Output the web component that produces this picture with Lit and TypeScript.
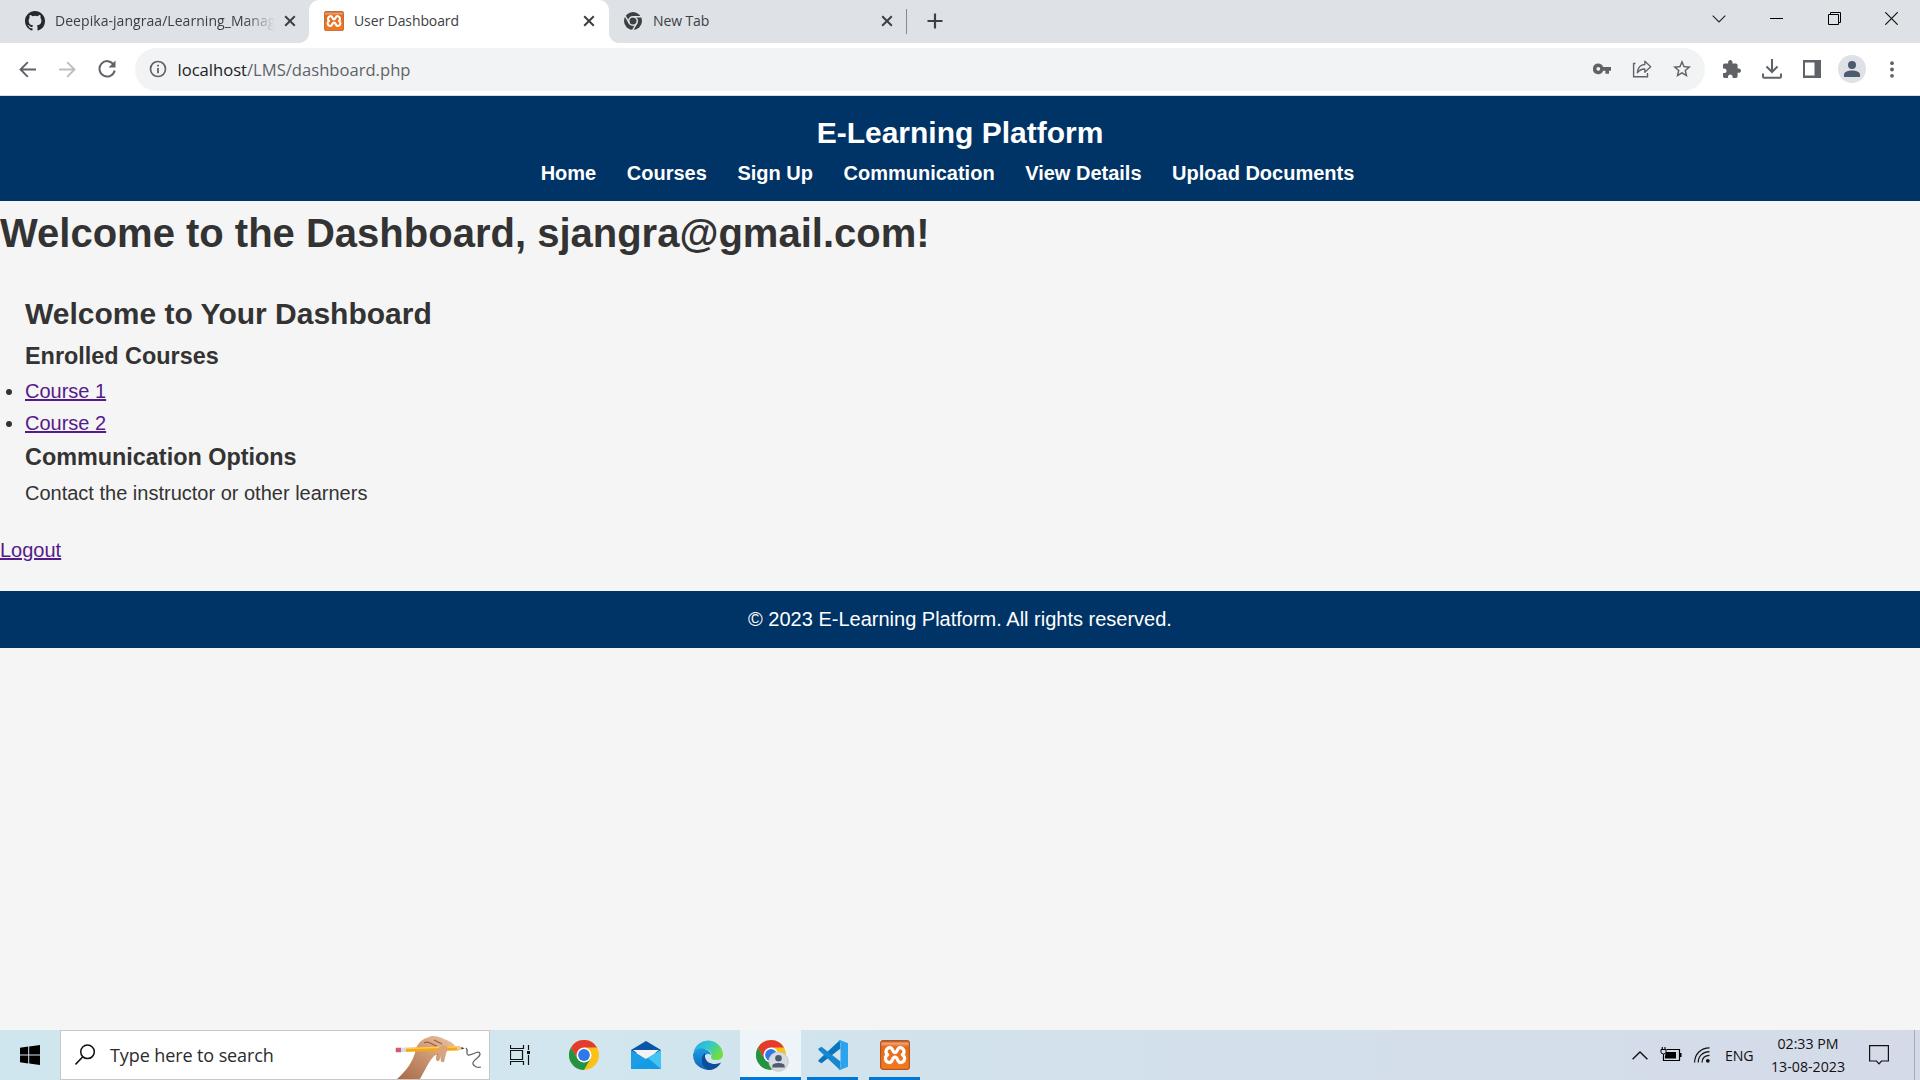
import { LitElement, html, css, svg } from "lit";
import { customElement } from "lit/decorators.js";

const closeX = html`<svg width="12" height="12" viewBox="0 0 12 12"><path d="M1.2 1.2L10.8 10.8M10.8 1.2L1.2 10.8" stroke="#3c4043" stroke-width="2" fill="none"/></svg>`;

const xamppIcon = (size: number, id: string) => html`<svg width=${size} height=${size} viewBox="0 0 30 30">
  <defs><linearGradient id=${id} x1="0" y1="0" x2="0" y2="1"><stop offset="0" stop-color="#b5501c"/><stop offset=".1" stop-color="#f0a070"/><stop offset=".22" stop-color="#e4691c"/><stop offset="1" stop-color="#f47a20"/></linearGradient></defs>
  <rect x=".6" y=".6" width="28.8" height="28.8" rx="2.6" fill="url(#${id})" stroke="#b4561e" stroke-width="1.2"/>
  <path d="M9 7.800C13.200 6.400 12 12.600 15 12.600C18 12.600 16.800 6.400 21 7.800C25 9.400 24.600 13.400 22.300 14.700C25.600 16.600 25.400 21.600 21 22.500C17 23.200 18.300 17.200 15 17.200C11.700 17.200 13 23.200 9 22.500C4.600 21.600 4.400 16.600 7.700 14.700C5.400 13.400 5 9.400 9 7.800Z" fill="none" stroke="#fff" stroke-width="3.200" stroke-linejoin="round"/>
</svg>`;

const chromeArt = svg`
  <circle cx="15" cy="15" r="15" fill="#fbc116"/>
  <path d="M15 7.500H28A15 15 0 0 0 2 7.500L8.500 18.750Z" fill="#e33b2e"/>
  <path d="M2 7.500A15 15 0 0 0 15 30L21.500 18.750L15 22.500L8.500 18.750Z" fill="#229342"/>
  <circle cx="15" cy="15" r="7.500" fill="#fff"/>
  <circle cx="15" cy="15" r="5.900" fill="#2f78ea"/>`;

@customElement("browser-chrome")
class BrowserChrome extends LitElement {
  static styles = css`
    :host { display: block; font-family: "Open Sans", "Noto Sans", sans-serif; color: #3c4043; }
    * { box-sizing: border-box; }
    svg { display: block; flex: none; }
    .tabs { display: flex; height: 43px; background: #dee1e6; }
    .tab { display: flex; align-items: center; height: 42px; font-size: 14px; letter-spacing: -0.1px; flex: none; }
    .tab.first { width: 309px; padding: 0 13px 0 25px; }
    .tab.active { width: 300px; height: 43px; padding: 0 14px 1px 15px; background: #fff; border-radius: 10px 10px 0 0; position: relative; }
    .tab.active::before, .tab.active::after { content: ""; position: absolute; bottom: 0; width: 10px; height: 10px; }
    .tab.active::before { left: -10px; background: radial-gradient(circle at 0 0, #dee1e6 9.5px, #fff 10.3px); }
    .tab.active::after { right: -10px; background: radial-gradient(circle at 10px 0, #dee1e6 9.5px, #fff 10.3px); }
    .tab.last { width: 297px; padding: 0 13px 0 14px; }
    .title { flex: 1; margin-left: 10px; white-space: nowrap; overflow: hidden; padding-bottom: 2px; }
    .first .title { margin-right: 9px; letter-spacing: 0.05px; -webkit-mask-image: linear-gradient(90deg, #000 86%, transparent); mask-image: linear-gradient(90deg, #000 86%, transparent); }
    .sep { width: 1px; height: 25px; margin-top: 9px; background: #85888d; }
    .plus { margin: 13px 0 0 20px; }
    .controls { display: flex; margin-left: auto; height: 37px; align-items: center; }
    .controls span { width: 57.3px; display: flex; justify-content: center; }
    .bar { display: flex; align-items: center; height: 52px; background: #fff; padding: 0 8px 0 7px; }
    .nav { width: 40px; display: flex; justify-content: center; }
    .pill { display: flex; align-items: center; flex: 1; height: 43px; margin: 0 7px 0 8px; padding: 0 3px 0 14px; border-radius: 22px; background: #f1f3f4; }
    .url { margin-left: 10.5px; flex: 1; font-size: 16.6px; letter-spacing: 0; color: #5f6368; white-space: nowrap; }
    .url b { font-weight: 400; color: #202124; }
    .cell { width: 40px; display: flex; justify-content: center; flex: none; }
    .avatar { width: 28px; height: 28px; border-radius: 50%; background: #dee1e6; display: flex; justify-content: center; align-items: center; }
    .line { height: 1px; background: #dadce0; }
  `;
  render() {
    return html`
      <div class="tabs">
        <div class="tab first">
          <svg width="20" height="20" viewBox="0 0 16 16"><path fill="#24292f" d="M8 0C3.580 0 0 3.580 0 8c0 3.540 2.290 6.530 5.470 7.590.4.070.55-.17.55-.38 0-.19-.01-.82-.01-1.490-2.010.37-2.530-.49-2.690-.94-.09-.23-.48-.94-.82-1.130-.28-.15-.68-.52-.01-.53.63-.01 1.080.58 1.230.82.72 1.210 1.870.87 2.330.66.070-.52.28-.87.51-1.070-1.780-.2-3.640-.89-3.640-3.950 0-.87.31-1.590.82-2.150-.08-.2-.36-1.020.080-2.120 0 0 .67-.21 2.200.82a7.600 7.600 0 0 1 4 0c1.530-1.040 2.200-.82 2.200-.82.44 1.100.16 1.920.080 2.120.51.56.82 1.270.82 2.150 0 3.070-1.870 3.750-3.650 3.950.29.25.54.73.54 1.480 0 1.070-.01 1.930-.01 2.200 0 .21.15.46.55.38A8.010 8.010 0 0 0 16 8c0-4.420-3.580-8-8-8z"/></svg>
          <span class="title">Deepika-jangraa/Learning_Manag</span>${closeX}
        </div>
        <div class="tab active">${xamppIcon(20, "xa")}<span class="title">User Dashboard</span>${closeX}</div>
        <div class="tab last">
          <svg width="20" height="20" viewBox="0 0 20 20"><circle cx="10" cy="10" r="9" fill="#3c4043"/><circle cx="10" cy="10" r="4.300" fill="none" stroke="#dee1e6" stroke-width="1.600"/><path d="M10 5.700H18.500M6.300 12.200L2.200 5M13.700 12.200L9.500 19.500" stroke="#dee1e6" stroke-width="1.500"/></svg>
          <span class="title">New Tab</span>${closeX}
        </div>
        <div class="sep"></div>
        <svg class="plus" width="16" height="16" viewBox="0 0 16 16"><path d="M8 .5V15.500M.5 8H15.500" stroke="#3c4043" stroke-width="2.200"/></svg>
        <div class="controls">
          <span><svg width="14" height="8" viewBox="0 0 14 8"><path d="M.7.700L7 7L13.300.700" fill="none" stroke="#222" stroke-width="1.100"/></svg></span>
          <span><svg width="13" height="2" viewBox="0 0 13 2"><path d="M0 .5H13" stroke="#000"/></svg></span>
          <span><svg width="13" height="13" viewBox="0 0 13 13"><path d="M.5 2.500H10.500V12.500H.5ZM2.500 2.500V.5H12.500V10.500H10.500" fill="none" stroke="#000"/></svg></span>
          <span><svg width="13" height="13" viewBox="0 0 13 13"><path d="M.3.300L12.700 12.700M12.700.300L.3 12.700" stroke="#111" stroke-width="1.200"/></svg></span>
        </div>
      </div>
      <div class="bar">
        <div class="nav"><svg width="17" height="17" viewBox="0 0 17 17"><path d="M17 8.500H2M8.800 1.200L1.500 8.500L8.800 15.800" fill="none" stroke="#5f6368" stroke-width="1.900"/></svg></div>
        <div class="nav"><svg width="17" height="17" viewBox="0 0 17 17"><path d="M0 8.500H15M8.200 1.200L15.500 8.500L8.200 15.800" fill="none" stroke="#bcbec1" stroke-width="1.900"/></svg></div>
        <div class="nav"><svg width="18" height="18" viewBox="0 0 18 18"><path d="M15.700 4.700A7.700 7.700 0 1 0 16.700 10.500" fill="none" stroke="#5f6368" stroke-width="2"/><path d="M17.500.6V7.600H10.500Z" fill="#5f6368"/></svg></div>
        <div class="pill">
          <svg width="18" height="18" viewBox="0 0 18 18"><circle cx="9" cy="9" r="7.500" fill="none" stroke="#5f6368" stroke-width="1.700"/><path d="M9 8V13.200M9 4.800V6.600" stroke="#5f6368" stroke-width="1.800"/></svg>
          <span class="url"><b>localhost</b>/LMS/dashboard.php</span>
          <span class="cell"><svg width="18" height="12" viewBox="0 0 18 12"><path fill-rule="evenodd" fill="#5f6368" d="M5.300.5A5.300 5.300 0 1 0 10.200 7.700H12.400V10.800H16V7.700H18V4H10.200A5.300 5.300 0 0 0 5.300.5ZM5.300 3.900A1.900 1.900 0 1 1 5.300 7.700A1.900 1.900 0 0 1 5.300 3.900Z"/></svg></span>
          <span class="cell"><svg width="20" height="18" viewBox="0 0 20 18"><path d="M3.500 3.500H1.600V16.700H15.500V13" fill="none" stroke="#5f6368" stroke-width="1.400"/><path d="M5.300 12.800C5.800 8 8.700 4.700 12.800 4.500V1.200L18.700 6.800L12.800 12.200V9C9.500 8.900 7.200 10.200 5.300 12.800Z" fill="none" stroke="#5f6368" stroke-width="1.300" stroke-linejoin="round"/></svg></span>
          <span class="cell"><svg width="18" height="18" viewBox="2 2 20 20"><path fill="#5f6368" d="M22 9.240l-7.190-.62L12 2 9.190 8.630 2 9.240l5.460 4.730L5.820 21 12 17.270 18.180 21l-1.630-7.030L22 9.240zM12 15.400l-3.760 2.270 1-4.280-3.320-2.880 4.380-.38L12 6.100l1.710 4.040 4.380.38-3.320 2.880 1 4.280L12 15.400z"/></svg></span>
        </div>
        <span class="cell"><svg width="18" height="18" viewBox="2 1 21 21"><path fill="#5f6368" d="M20.500 11H19V7c0-1.100-.9-2-2-2h-4V3.500C13 2.120 11.880 1 10.500 1S8 2.120 8 3.500V5H4c-1.100 0-1.990.9-1.990 2v3.800H3.500c1.490 0 2.700 1.210 2.700 2.700s-1.210 2.700-2.700 2.700H2V20c0 1.100.9 2 2 2h3.800v-1.500c0-1.490 1.210-2.700 2.700-2.700 1.490 0 2.700 1.210 2.700 2.700V22H17c1.100 0 2-.9 2-2v-4h1.500c1.380 0 2.500-1.120 2.500-2.500S21.880 11 20.500 11z"/></svg></span>
        <span class="cell"><svg width="20" height="20" viewBox="0 0 20 20"><path d="M10 0V12.500M4.500 7.500L10 13L15.500 7.500M1 14.500V17.600Q1 18.800 2.200 18.800H17.800Q19 18.800 19 17.600V14.500" fill="none" stroke="#5f6368" stroke-width="2"/></svg></span>
        <span class="cell"><svg width="18" height="18" viewBox="0 0 18 18"><path fill="#5f6368" fill-rule="evenodd" d="M0 0H18V18H0ZM2 2.500V15.500H11.500V2.500Z"/></svg></span>
        <span class="cell"><span class="avatar"><svg width="16" height="16" viewBox="0 0 16 16"><circle cx="8" cy="4" r="4" fill="#4d5b70"/><path d="M0 16V13.500C0 10.800 4.500 9.600 8 9.600S16 10.800 16 13.500V16Z" fill="#4d5b70"/></svg></span></span>
        <span class="cell"><svg width="4" height="17" viewBox="0 0 4 17"><g fill="#5f6368"><circle cx="2" cy="2.200" r="1.900"/><circle cx="2" cy="8.500" r="1.900"/><circle cx="2" cy="14.800" r="1.900"/></g></svg></span>
      </div>
      <div class="line"></div>`;
  }
}

@customElement("learning-page")
class LearningPage extends LitElement {
  static styles = css`
    :host { display: block; background: #f5f5f5; font: 20px/32px Arial, "Liberation Sans", sans-serif; color: #333; }
    h1, h2, h3, p, ul { margin: 0; padding: 0; }
    header { background: #003366; color: #fff; text-align: center; padding: 12.5px 0; height: 80px; }
    .logo { font-size: 30px; line-height: 48px; font-weight: 700; }
    nav a { color: #fff; font-weight: 700; text-decoration: none; margin-right: 25px; }
    h1 { font-size: 40px; line-height: 64px; }
    section { padding: 25px; }
    h2 { font-size: 30px; line-height: 48px; }
    h3 { font-size: 23.4px; line-height: 37.44px; }
    .link { color: #551a8b; text-decoration: underline; }
    footer { margin-top: 25px; background: #003366; color: #fff; text-align: center; padding: 12.5px 0; }
  `;
  render() {
    const links = ["Home", "Courses", "Sign Up", "Communication", "View Details", "Upload Documents"];
    return html`
      <header><div class="logo">E-Learning Platform</div><nav>${links.map((l) => html`<a>${l}</a> `)}</nav></header>
      <h1>Welcome to the Dashboard, sjangra@gmail.com!</h1>
      <section>
        <h2>Welcome to Your Dashboard</h2>
        <h3>Enrolled Courses</h3>
        <ul><li><a class="link">Course 1</a></li><li><a class="link">Course 2</a></li></ul>
        <h3>Communication Options</h3>
        <p>Contact the instructor or other learners</p>
      </section>
      <a class="link">Logout</a>
      <footer>© 2023 E-Learning Platform. All rights reserved.</footer>`;
  }
}

@customElement("task-bar")
class TaskBar extends LitElement {
  static styles = css`
    :host { display: flex; height: 50px; background: linear-gradient(90deg, #cfe6ee 0%, #d1e6ee 30%, #d2e2ec 50%, #d4deeb 75%, #d4dae8 100%); font-family: "Open Sans", "Noto Sans", sans-serif; color: #111; }
    * { box-sizing: border-box; }
    svg { display: block; flex: none; }
    .start { width: 60px; display: flex; align-items: center; justify-content: center; }
    .search { width: 430px; border: 1px solid #c8c8c8; background: #fff; display: flex; align-items: center; padding: 0 6px 0 14px; }
    .hint { flex: 1; margin-left: 15px; font-size: 18px; letter-spacing: -0.1px; color: #2b2b2b; white-space: nowrap; }
    .app { width: 62px; display: flex; align-items: center; justify-content: center; }
    .app.view { width: 60px; margin-right: 3px; }
    .app.on { background: #edf5f8; border-bottom: 3px solid #0078d7; padding: 3px 0 0 3px; width: 61px; margin-left: 1px; }
    .app.open { width: 51px; border-bottom: 3px solid #0078d7; padding-top: 3px; margin-left: 6px; }
    .app.open + .open { margin-left: 11px; }
    .tray { margin-left: auto; display: flex; align-items: center; }
    .lang { margin-left: 15px; font-size: 14.2px; width: 30px; letter-spacing: -0.1px; }
    .clock { width: 92px; margin-left: 7px; text-align: center; font-size: 14.200px; line-height: 23px; white-space: nowrap; padding-bottom: 1px; }
    .note { margin-left: 15px; }
    .edge { width: 1px; height: 50px; margin: 0 5px 0 25px; background: #a4acb9; }
  `;
  render() {
    return html`
      <div class="start"><svg width="20" height="20" viewBox="0 0 20 20"><path d="M0 2.800L8.200 1.600V9.400H0ZM9.200 1.400L20 0V9.400H9.200ZM0 10.500H8.200V18.400L0 17.200ZM9.200 10.500H20V20L9.200 18.500Z" fill="#000"/></svg></div>
      <div class="search">
        <svg width="20" height="22" viewBox="0 0 20 22"><circle cx="12.500" cy="7.800" r="6.800" fill="none" stroke="#111" stroke-width="1.500"/><path d="M7.800 12.800L.5 20.500" stroke="#111" stroke-width="1.600"/></svg>
        <span class="hint">Type here to search</span>
        <svg width="94" height="48" viewBox="0 0 94 48">
          <defs><linearGradient id="sk" x1="0" y1="1" x2="1" y2="0"><stop offset="0" stop-color="#a86a48"/><stop offset=".5" stop-color="#c99470"/><stop offset="1" stop-color="#edc5a2"/></linearGradient></defs>
          <path d="M8 48C19 38 23 31 26 22C27 14 32 8 39 6.500C43 4 49 5 54 7.500C60 10 65 12 66 15C67 18 62 18 59 17C57 22 56 27 55 31C52 32 51 29 52 25L50 30C47 31 46 27 48 23C43 26 40 31 37 37L31 48Z" fill="url(#sk)"/>
          <path d="M35 12C40 9 43 14 48 15M45 9L53 13M48 24L51 19" fill="none" stroke="#9a6144" stroke-width="1.200"/>
          <path d="M13 17L69 15L75 17L69 19.500L13 21Z" fill="#f5a71b"/><path d="M13 17L69 15V16.500L13 18.300Z" fill="#ffcc59"/>
          <path d="M68 15L75 17.300L68 19.700Z" fill="#e9c99f"/><path d="M72.500 16.200L75.500 17.300L72.500 18.400Z" fill="#333"/>
          <path d="M11 16.700H17V21H11Z" fill="#d3dce4"/><path d="M7 16.800H12V21.200H7Q6 19 7 16.800Z" fill="#d65b70"/>
          <path d="M47 20C50 15 55 13 58 15.500C60 18 57 21 53 22C50 24 48 25 47 20Z" fill="#dba37d"/>
          <path d="M77 17C80 20 76 23 79 24C83 25 90 18 91 23C91 27 83 29 84 33C85 36 89 37 92 36" fill="none" stroke="#5d6267" stroke-width="1.300"/>
        </svg>
      </div>
      <div class="app view"><svg width="20" height="20" viewBox="0 0 20 20"><path d="M.5 0V3.500H13.500V0M.5 20V16.500H13.500V20M.5 5.500H12.500V14.500H.5ZM18.500 0V5M18.500 10V20" fill="none" stroke="#111" stroke-width="1.200"/><rect x="17" y="6" width="3" height="3" fill="#111"/></svg></div>
      <div class="app"><svg width="30" height="30" viewBox="0 0 30 30">${chromeArt}</svg></div>
      <div class="app"><svg width="30" height="28" viewBox="0 0 30 28"><path d="M0 9L15 0L30 9V12H0Z" fill="#0a55a5"/><path d="M2 9H28L15 19Z" fill="#f4f4f4"/><path d="M0 9V28H30V9L15 18Z" fill="#1e9de4"/><path d="M30 9V28L12 17L15 18Z" fill="#45c4f2"/><path d="M0 28H30L17 17Z" fill="#159be6"/></svg></div>
      <div class="app"><svg width="30" height="30" viewBox="0 0 30 30">
        <defs><linearGradient id="e1" x1="0" y1="0" x2="1" y2=".5"><stop offset="0" stop-color="#27a9e8"/><stop offset=".5" stop-color="#31c7d0"/><stop offset="1" stop-color="#70dd43"/></linearGradient><linearGradient id="e2" x1="0" y1="0" x2="0" y2="1"><stop offset="0" stop-color="#1b9de2"/><stop offset="1" stop-color="#1263b8"/></linearGradient></defs>
        <path d="M.5 12A15 15 0 0 1 30 14C30 19 26 20.500 22 20C17 19.500 18 17 18.500 15.500C19 12 15 8.500 9 9C4.500 9.400 1.500 11 .5 12Z" fill="url(#e1)"/>
        <path d="M0 14.500C1 10 5 8 9 8.500C14 9 18 12 18 15C14 11.500 8 17 11 22C14 27 20 28 23 27.500A15 15 0 0 1 0 14.500Z" fill="url(#e2)"/>
        <path d="M12 13C6 18 9 29 17 30C21.500 29.700 26 26.500 28 22.500C24 25 13.500 25 12 17Z" fill="#0d4e9b"/>
      </svg></div>
      <div class="app on"><svg width="33" height="33" viewBox="0 -1 33 33">${chromeArt}<circle cx="22.500" cy="21.500" r="9.800" fill="#d7dade" stroke="#b8bbc0" stroke-width=".6"/><circle cx="22.500" cy="18.300" r="3.300" fill="#4d5b70"/><path d="M16.300 27.500V26C16.300 23.600 20 22.900 22.500 22.900S28.700 23.600 28.700 26V27.500Z" fill="#4d5b70"/></svg></div>
      <div class="app open"><svg width="30" height="30" viewBox="0 0 30 30"><path d="M22 0L22.500 8.500L3.500 23.200L.5 21.500Q0 20.800.6 20Z" fill="#0a74bd"/><path d="M22 30L22.500 21.500L3.500 6.800L.5 8.500Q0 9.200.6 10Z" fill="#1788d0"/><path d="M22 0L30 3.300V26.700L22 30C21.400 30 20.700 29.500 20.500 29L22.500 27V3L20.500 1.200C20.800.400 21.400 0 22 0Z" fill="#2ca3ee"/></svg></div>
      <div class="app open">${xamppIcon(30, "xb")}</div>
      <div class="tray">
        <svg width="16" height="9" viewBox="0 0 16 9"><path d="M.6 8.300L8 1L15.400 8.300" fill="none" stroke="#111" stroke-width="1.400"/></svg>
        <svg width="46" height="16" viewBox="-13 0 46 16"><path d="M5.500 2.500H18.500V13.500H2.500V9" fill="none" stroke="#000" stroke-width="1.200"/><path d="M5 5H15V11.500H4V9Z" fill="#000"/><path d="M19 6H20.500V10H19Z" fill="#000"/><path d="M1.300 0V2.500M4 0V2.500" stroke="#000" stroke-width="1.100"/><path d="M0 2.500H5V5Q5 7 2.600 7Q0 7 0 5Z" fill="#d5deea" stroke="#000"/><path d="M2.500 7V13" stroke="#000"/></svg>
        <svg width="16" height="16" viewBox="0 0 16 16"><g fill="none" stroke="#111" stroke-width="1.200"><path d="M.6 15.500C.6 7 7 .8 15.500.8"/><path d="M4.200 15.500C4.200 9 9 4.600 15.500 4.600"/><path d="M8 15.500C8 11 11 8.300 15.500 8.300"/></g><circle cx="13.800" cy="13.800" r="1.900" fill="#111"/></svg>
        <span class="lang">ENG</span>
        <div class="clock"><div>02:33 PM</div><div>13-08-2023</div></div>
        <svg class="note" width="20" height="20" viewBox="0 0 20 20"><path d="M.6.600H19.400V16H12.500L10 18.800L7.500 16H.6Z" fill="none" stroke="#111" stroke-width="1.200"/></svg>
        <span class="edge"></span>
      </div>`;
  }
}

@customElement("app-root")
class AppRoot extends LitElement {
  static styles = css`
    :host { display: flex; flex-direction: column; width: 1920px; height: 1080px; overflow: hidden; }
    learning-page { flex: 1; min-height: 0; }
  `;
  render() {
    return html`<browser-chrome></browser-chrome><learning-page></learning-page><task-bar></task-bar>`;
  }
}
